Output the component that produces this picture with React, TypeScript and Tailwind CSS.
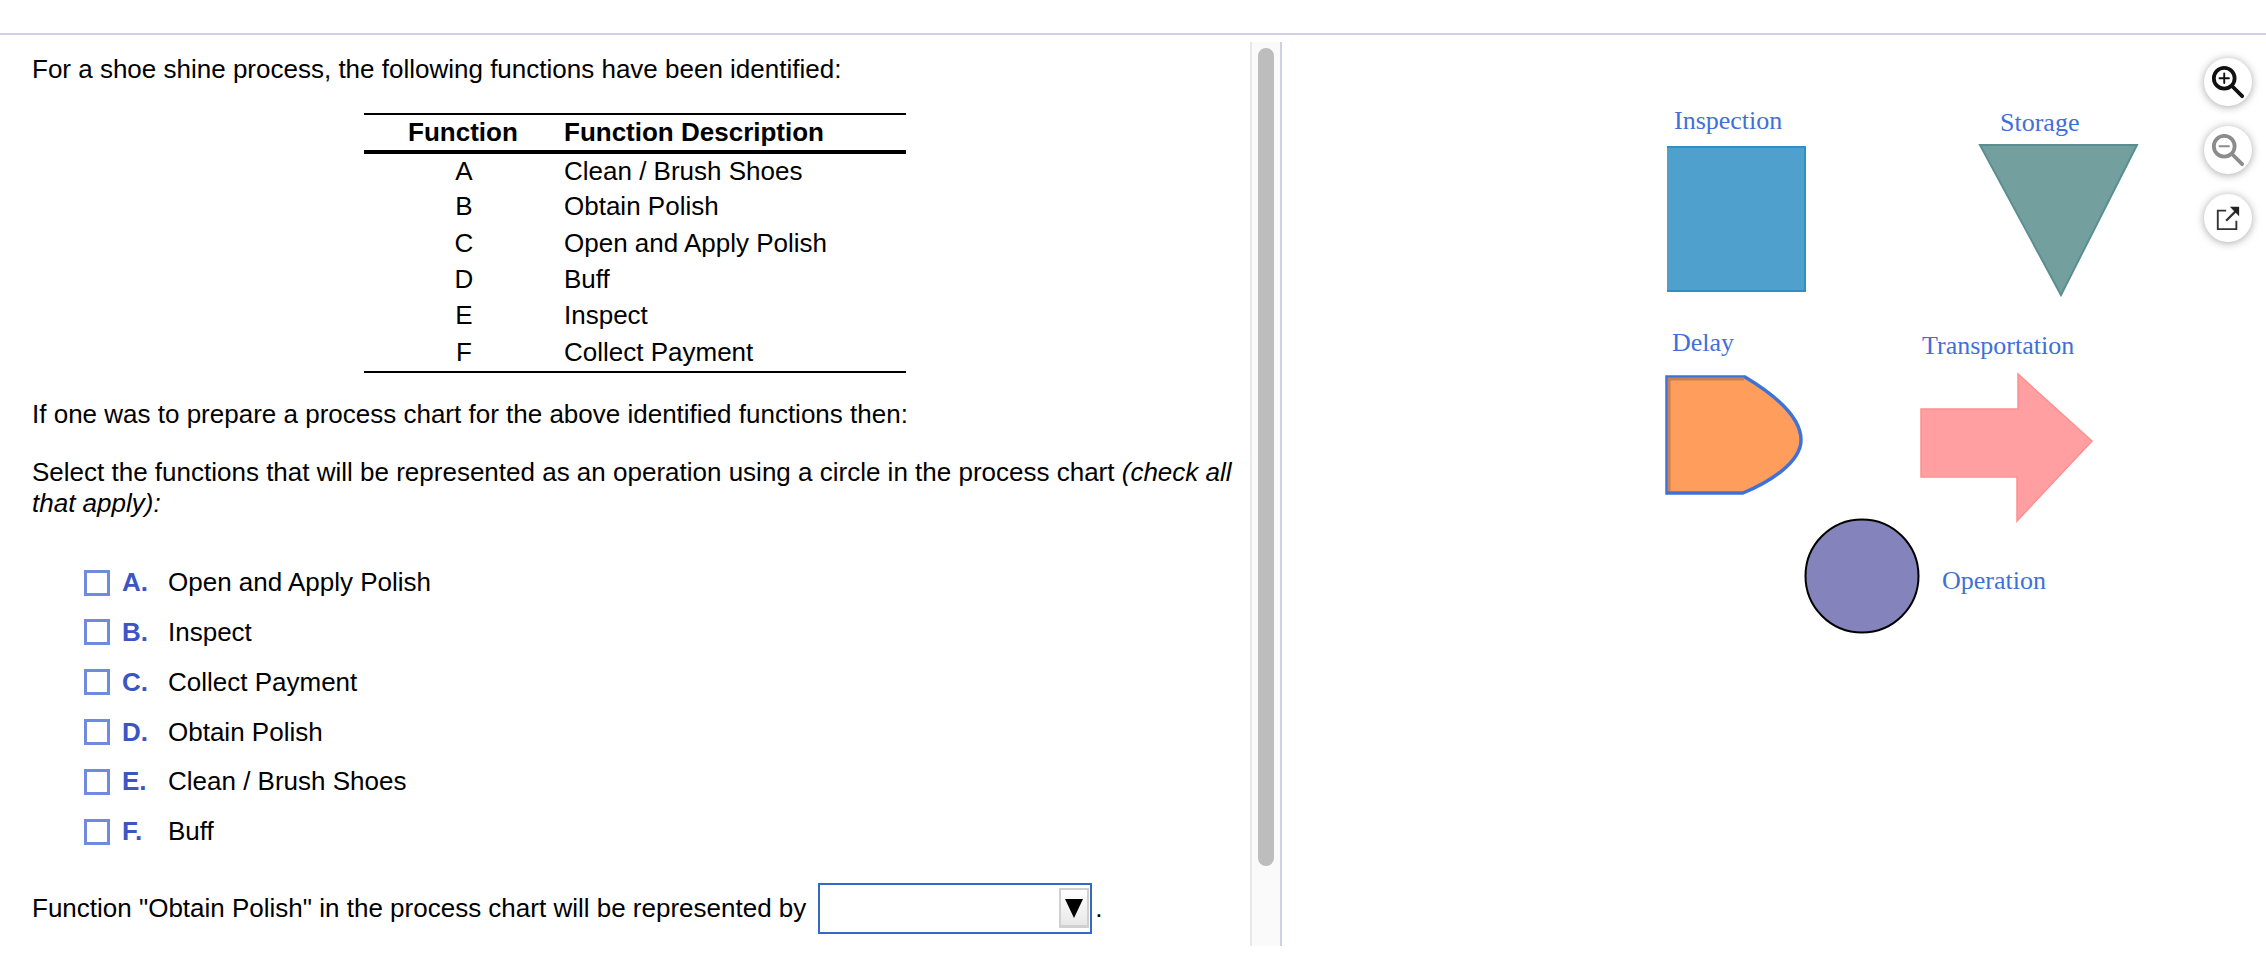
const rows = [
  ["A", "Clean / Brush Shoes"],
  ["B", "Obtain Polish"],
  ["C", "Open and Apply Polish"],
  ["D", "Buff"],
  ["E", "Inspect"],
  ["F", "Collect Payment"],
];

const options = [
  ["A.", "Open and Apply Polish"],
  ["B.", "Inspect"],
  ["C.", "Collect Payment"],
  ["D.", "Obtain Polish"],
  ["E.", "Clean / Brush Shoes"],
  ["F.", "Buff"],
];

function Shapes() {
  const label = { fontFamily: "'Liberation Serif', serif", fontSize: 26, fill: "#3f70d9" };
  return (
    <svg width="984" height="911" viewBox="1282 35 984 911" className="block">
      <text x="1674" y="129" style={label}>Inspection</text>
      <rect x="1667" y="147" width="138" height="144" fill="#4fa0cc" />
      <path d="M1667 147 H1805 V291 H1667" fill="none" stroke="#2f8fc4" strokeWidth="2" />
      <text x="2000" y="131" style={label}>Storage</text>
      <polygon points="1980,145 2137,145 2061,295" fill="#739f9f" stroke="#5b8f8f" strokeWidth="2" />
      <text x="1672" y="351" style={label}>Delay</text>
      <path d="M1667 377 H1745 C1770 392 1801 415 1801 440 C1801 462 1770 482 1743 493 H1667 Z" fill="#ff9e5c" stroke="#3f72d8" strokeWidth="3.5" />
      <path d="M1669 491 V379 H1744" fill="none" stroke="#c97f4e" strokeWidth="3" />
      <text x="1922" y="354" style={label}>Transportation</text>
      <polygon points="1921,409 2018,409 2018,374 2092,441 2017,521 2017,477 1921,477" fill="#ff9fa1" stroke="#ff8f90" strokeWidth="1.5" />
      <circle cx="1862" cy="576" r="56.5" fill="#8583bc" stroke="#000" strokeWidth="2" />
      <text x="1942" y="589" style={label}>Operation</text>
    </svg>
  );
}

function ToolButton({ children, top }: { children: React.ReactNode; top: string }) {
  return (
    <div className={`absolute left-[2204px] ${top} flex h-[48px] w-[48px] items-center justify-center rounded-full bg-white shadow-[0_1px_8px_rgba(0,0,0,0.35)]`}>
      {children}
    </div>
  );
}

export default function App() {
  return (
    <div className="relative h-[958px] w-[2266px] overflow-hidden bg-white font-['Liberation_Sans',Arial,sans-serif] text-[26px] text-black">
      <div className="h-[33px]" />
      <div className="h-[2px] bg-[#d0d1e2]" />
      <div className="flex h-[911px]">
        <div className="w-[1250px] pl-[32px] pt-[19px]">
          <p className="leading-[31px]">For a shoe shine process, the following functions have been identified:</p>

          <table className="ml-[332px] mt-[28px] w-[542px] border-collapse border-y-2 border-black leading-[30px]">
            <thead>
              <tr className="h-[38px] border-b-4 border-black text-left font-bold">
                <th className="w-[200px] pr-[2px] pb-[2px] text-center">Function</th>
                <th className="pb-[2px] pl-0">Function Description</th>
              </tr>
            </thead>
            <tbody>
              {rows.map(([letter, desc]) => (
                <tr key={letter} className="h-[36.3px]">
                  <td className="text-center">{letter}</td>
                  <td>{desc}</td>
                </tr>
              ))}
              <tr className="h-[2px]"><td colSpan={2} /></tr>
            </tbody>
          </table>

          <p className="mt-[26px] leading-[31px]">If one was to prepare a process chart for the above identified functions then:</p>
          <p className="mt-[27px] w-[1210px] leading-[31px]">
            Select the functions that will be represented as an operation using a circle in the process chart <i>(check all that apply):</i>
          </p>

          <ul className="ml-[52px] mt-[39px]">
            {options.map(([letter, text]) => (
              <li key={letter} className="flex h-[49.8px] items-center">
                <span className="h-[26px] w-[26px] border-[3px] border-[#6f8ade]" />
                <b className="ml-[12px] w-[46px] text-[#3b56c2]">{letter}</b>
                <span>{text}</span>
              </li>
            ))}
          </ul>

          <div className="mt-[26px] flex items-center">
            <span>Function "Obtain Polish" in the process chart will be represented by</span>
            <div className="ml-[12px] flex h-[51px] w-[274px] items-center justify-end border-[2px] border-[#3569c9] pr-[1px]">
              <div className="flex h-[40px] w-[30px] items-center justify-center border-[2px] border-b-[3px] border-[#d0d0d0] bg-linear-to-b from-white to-[#e8e8e8]">
                <svg width="20" height="20" viewBox="0 0 20 20"><polygon points="1,1 19,1 10,20" fill="#000" /></svg>
              </div>
            </div>
            <span className="ml-[3px]">.</span>
          </div>
        </div>

        <div className="mt-[7px] flex h-[904px] w-[32px] justify-center border-x-2 border-l-[#e8e8e8] border-r-[#cdd0e2] bg-[#fafafa] pt-[6px]">
          <div className="h-[818px] w-[16px] rounded-full bg-[#bdbdbd]" />
        </div>

        <Shapes />
      </div>

      <ToolButton top="top-[58px]">
        <svg width="34" height="34" viewBox="0 0 36 36" fill="none" stroke="#111" strokeLinecap="round">
          <circle cx="14" cy="14" r="11" strokeWidth="4" />
          <path d="M14 9v10M9 14h10" strokeWidth="2" />
          <path d="M23 23l10 10" strokeWidth="4" />
        </svg>
      </ToolButton>
      <ToolButton top="top-[126px]">
        <svg width="34" height="34" viewBox="0 0 36 36" fill="none" stroke="#8c8c8c" strokeLinecap="round">
          <circle cx="14" cy="14" r="11" strokeWidth="4" />
          <path d="M9 14h10" strokeWidth="2" />
          <path d="M23 23l10 10" strokeWidth="4" />
        </svg>
      </ToolButton>
      <ToolButton top="top-[194px]">
        <svg width="26" height="26" viewBox="0 0 28 28" fill="none" stroke="#333" strokeWidth="2">
          <path d="M12 6H3v20h20v-9" />
          <path d="M12 17L24 5" strokeWidth="2.5" />
          <path d="M16 2h10v10z" fill="#222" strokeWidth="0" />
        </svg>
      </ToolButton>
    </div>
  );
}
